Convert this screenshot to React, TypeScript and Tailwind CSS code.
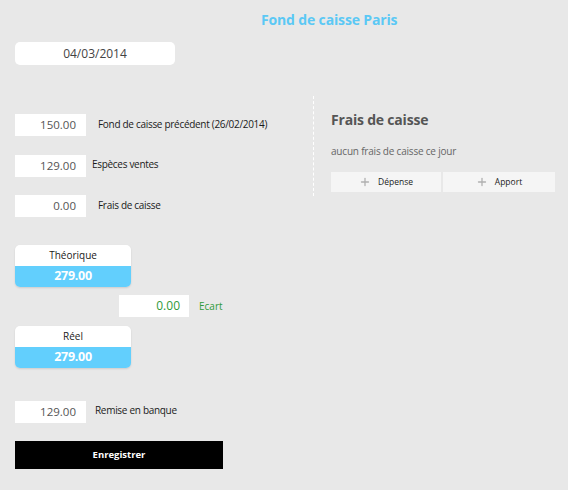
import { Plus } from "lucide-react";

function AmountRow({
  value,
  label,
  labelClass,
}: {
  value: string;
  label: string;
  labelClass: string;
}) {
  return (
    <div className="flex items-start">
      <div className="w-[71px] h-[22px] bg-white flex items-center justify-end pr-[10px] text-[11.5px] text-[#555]">
        {value}
      </div>
      <div className={`text-[10px] tracking-[-0.3px] text-[#1a1a1a] leading-none pt-[5px] ${labelClass}`}>
        {label}
      </div>
    </div>
  );
}

function TotalCard({ title, value }: { title: string; value: string }) {
  return (
    <div className="w-[116px] h-[42px] rounded-[5px] overflow-hidden shadow-[0_1px_2px_rgba(0,0,0,0.12)] flex flex-col">
      <div className="h-[21px] bg-white flex items-center justify-center text-[10px] text-[#1a1a1a]">
        {title}
      </div>
      <div className="flex-1 bg-[#62cffd] flex items-center justify-center text-[12.5px] tracking-[-0.3px] font-bold text-white">
        {value}
      </div>
    </div>
  );
}

export default function App() {
  return (
    <div
      className="w-[568px] h-[490px] bg-[#e8e8e8] overflow-hidden"
      style={{ fontFamily: '"Open Sans", "Noto Sans", sans-serif' }}
    >
      <div className="pt-[10px] pl-[261px] text-[14px] tracking-[-0.15px] font-bold text-[#5bc8f5] leading-[20px]">
        Fond de caisse Paris
      </div>

      <div className="mt-[12px] ml-[15px] w-[160px] h-[23px] rounded-[5px] bg-white flex items-center justify-center text-[12px] text-[#444]">
        04/03/2014
      </div>

      <div className="flex mt-[31px]">
        {/* left column */}
        <div className="w-[313px] pl-[15px] pt-[18px] flex flex-col">
          <AmountRow value="150.00" label="Fond de caisse précédent (26/02/2014)" labelClass="ml-[12px]" />
          <div className="mt-[19px]">
            <AmountRow value="129.00" label="Espèces ventes" labelClass="ml-[6px] -mt-[1px]" />
          </div>
          <div className="mt-[18px]">
            <AmountRow value="0.00" label="Frais de caisse" labelClass="ml-[12px]" />
          </div>

          <div className="mt-[28px]">
            <TotalCard title="Théorique" value="279.00" />
          </div>

          <div className="mt-[8px] ml-[104px] flex items-center">
            <div className="w-[70px] h-[22px] bg-white flex items-center justify-end pr-[9px] text-[12px] text-[#2f9a3a]">
              0.00
            </div>
            <div className="ml-[10px] text-[10px] text-[#2f9a3a]">Ecart</div>
          </div>

          <div className="mt-[9px]">
            <TotalCard title="Réel" value="279.00" />
          </div>

          <div className="mt-[33px]">
            <AmountRow value="129.00" label="Remise en banque" labelClass="ml-[9px] -mt-[1px]" />
          </div>

          <button className="mt-[18px] w-[208px] h-[28px] bg-black text-white text-[9.5px] font-bold">
            Enregistrer
          </button>
        </div>

        {/* right column */}
        <div className="self-start border-l border-dashed border-white pl-[17px] pt-[14px] h-[100px] flex-1 pr-[12px]">
          <div className="text-[14px] tracking-[-0.2px] font-bold text-[#555] leading-[20px]">Frais de caisse</div>
          <div className="mt-[14px] text-[10px] tracking-[-0.2px] text-[#666]">aucun frais de caisse ce jour</div>
          <div className="mt-[13px] flex gap-[2px]">
            <button className="w-[110px] h-[20px] bg-[#f5f5f5] flex items-center justify-center gap-[7px] text-[8.5px] text-[#222]">
              <Plus size={12} strokeWidth={2.6} className="text-[#b0b0b0]" />
              Dépense
            </button>
            <button className="w-[112px] h-[20px] bg-[#f5f5f5] flex items-center justify-center gap-[7px] text-[8.5px] text-[#222]">
              <Plus size={12} strokeWidth={2.6} className="text-[#b0b0b0]" />
              Apport
            </button>
          </div>
        </div>
      </div>
    </div>
  );
}
